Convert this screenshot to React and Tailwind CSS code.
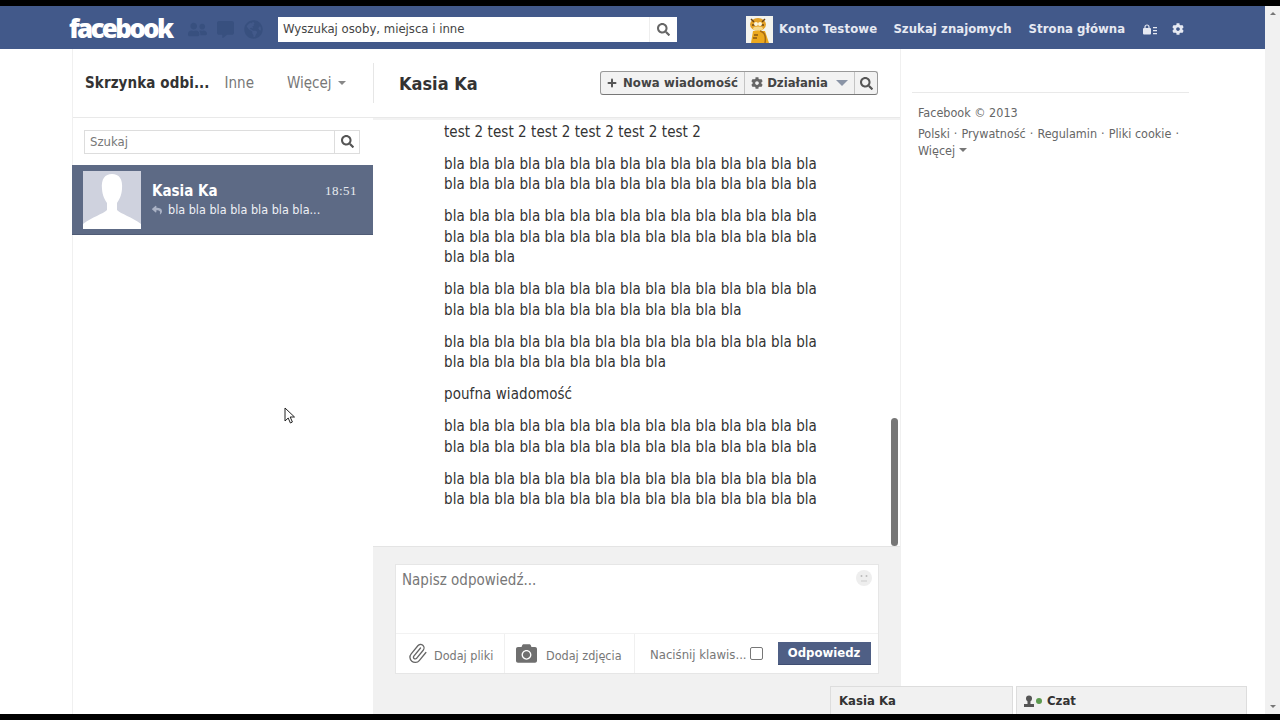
import React from 'react'
import { Paperclip, Plus } from 'lucide-react'
import { FaCog, FaUserFriends, FaCommentAlt, FaGlobeAmericas, FaReply, FaCamera, FaSearch } from 'react-icons/fa'

const paragraphs = [
  ['test 2 test 2 test 2 test 2 test 2 test 2'],
  ['bla bla bla bla bla bla bla bla bla bla bla bla bla bla bla', 'bla bla bla bla bla bla bla bla bla bla bla bla bla bla bla'],
  ['bla bla bla bla bla bla bla bla bla bla bla bla bla bla bla', 'bla bla bla bla bla bla bla bla bla bla bla bla bla bla bla', 'bla bla bla'],
  ['bla bla bla bla bla bla bla bla bla bla bla bla bla bla bla', 'bla bla bla bla bla bla bla bla bla bla bla bla'],
  ['bla bla bla bla bla bla bla bla bla bla bla bla bla bla bla', 'bla bla bla bla bla bla bla bla bla'],
  ['poufna wiadomość'],
  ['bla bla bla bla bla bla bla bla bla bla bla bla bla bla bla', 'bla bla bla bla bla bla bla bla bla bla bla bla bla bla bla'],
  ['bla bla bla bla bla bla bla bla bla bla bla bla bla bla bla', 'bla bla bla bla bla bla bla bla bla bla bla bla bla bla bla'],
]

function Caret({ className }) {
  return <span className={`inline-block w-0 h-0 border-x-[4px] border-x-transparent border-t-[4px] ${className}`} />
}

function Garfield() {
  return (
    <svg width="27" height="27" viewBox="0 0 27 27" className="shrink-0">
      <rect width="27" height="27" fill="#f3f3ee" />
      <ellipse cx="12" cy="8.500" rx="8" ry="6.500" fill="#e3a127" />
      <path d="M5 3l3 3M19 3l-3 3M6 9h3M15 9h3" stroke="#6b4514" strokeWidth="1.500" />
      <circle cx="10" cy="8" r="2" fill="#fbf6dc" />
      <circle cx="14" cy="8" r="2" fill="#fbf6dc" />
      <ellipse cx="12" cy="12.500" rx="5" ry="2" fill="#f6d98a" />
      <path d="M7 15h12l4 12H5z" fill="#eca91e" />
      <path d="M14 15c5 1 6 6 5 12" stroke="#a66a12" strokeWidth="1.500" fill="none" />
      <path d="M8 19h4M7 22h4" stroke="#8a5a14" strokeWidth="1.500" />
    </svg>
  )
}

function Header() {
  return (
    <div className="h-[43px] shrink-0 w-[1265px] bg-[#42598a] flex items-center pt-[3px] font-['DejaVu_Sans_Condensed','DejaVu_Sans',sans-serif]">
      <div className="w-[118px] ml-[70px] shrink-0 flex items-center">
        <span className="text-white text-[26px] font-extrabold leading-none tracking-[-2.700px] font-['Open_Sans',sans-serif] -mt-[3px] -ml-[1px]">facebook</span>
      </div>
      <div className="flex items-center w-[90px] gap-[10px] text-[#38507f] shrink-0">
        <FaUserFriends size={19} />
        <FaCommentAlt size={17} />
        <FaGlobeAmericas size={19} />
      </div>
      <div className="w-[399px] h-[25px] bg-white flex items-center shrink-0">
        <span className="flex-1 pl-[5px] text-[13px] text-[#444]">Wyszukaj osoby, miejsca i inne</span>
        <span className="w-[28px] h-full flex items-center justify-center border-l border-[#eee]">
          <FaSearch size={13} className="text-[#666]" />
        </span>
      </div>
      <div className="flex items-center ml-[69px] text-[13px] font-bold text-[#e6e9f2] shrink-0">
        <Garfield />
        <span className="ml-[6px] tracking-[0.15px]">Konto Testowe</span>
        <span className="ml-[16px] tracking-[0.05px]">Szukaj znajomych</span>
        <span className="ml-[17px] tracking-[0.05px]">Strona główna</span>
        <svg width="14" height="11" viewBox="0 0 14 11" className="ml-[18px]" fill="#e6e9f2">
          <rect x="0" y="4" width="8" height="6.500" rx="1" />
          <path d="M2 4.500V3a2 2 0 014 0v1.500" fill="none" stroke="#e6e9f2" strokeWidth="1.200" />
          <path d="M10 3h4v1.200h-4zM10 6h4v1.200h-4zM10 9h4v1.200h-4z" />
        </svg>
        <FaCog size={12} className="ml-[15px]" />
      </div>
    </div>
  )
}

function Sidebar() {
  return (
    <div className="w-[301px] shrink-0 border-l border-[#f0f0f0] font-['DejaVu_Sans_Condensed',sans-serif]">
      <div className="h-[69px] flex items-center pl-[12px] border-b border-[#e9e9e9]">
        <span className="text-[15px] font-bold text-[#333] tracking-[0.1px]">Skrzynka odbi...</span>
        <span className="ml-[15px] text-[15px] text-[#777]">Inne</span>
        <span className="ml-[33px] text-[15px] text-[#777]">Więcej</span>
        <Caret className="ml-[6px] border-t-[#888]" />
      </div>
      <div className="h-[47px] flex items-center pl-[11px]">
        <div className="w-[276px] h-[24px] border border-[#ddd] flex items-center">
          <span className="flex-1 pl-[5px] text-[13px] text-[#777]">Szukaj</span>
          <span className="w-[25px] h-full border-l border-[#ddd] flex items-center justify-center">
            <FaSearch size={13} className="text-[#555]" />
          </span>
        </div>
      </div>
      <div className="h-[70px] -ml-px bg-[#5d6a85] flex items-center pl-[11px] pr-[16px] border-b border-[#4f5b75]">
        <svg width="58" height="58" viewBox="0 0 58 58" className="shrink-0">
          <rect width="58" height="58" fill="#cfd2de" />
          <path d="M29 3c-7 0-11 5-10 15 .5 7 3 11 5 14v7c-4 4-15 7-24 14v5h58v-5c-9-7-20-10-24-14v-7c2-3 4.500-7 5-14 1-10-3-15-10-15z" fill="#fff" />
        </svg>
        <div className="flex-1 ml-[11px] text-white">
          <div className="flex items-center justify-between leading-[20px]">
            <span className="text-[15px] font-bold">Kasia Ka</span>
            <span className="text-[13px] text-[#e8eaf0] font-['Liberation_Serif','DejaVu_Serif',serif] tracking-[0.5px]">18:51</span>
          </div>
          <div className="flex items-center text-[12.500px] leading-[18px] text-[#eef0f5]">
            <FaReply size={10} className="text-[#aab2c5] mr-[6px]" />
            <span>bla bla bla bla bla bla bla...</span>
          </div>
        </div>
      </div>
    </div>
  )
}

function Composer() {
  return (
    <div className="h-[168px] shrink-0 bg-[#f1f1f1] border-t border-[#e4e4e4] pt-[17px] pl-[22px]">
      <div className="w-[484px] h-[110px] bg-white border border-[#e6e6e6] flex flex-col">
        <div className="flex-1 flex items-start justify-between px-[6px] pt-[4px] pr-[5px]">
          <span className="text-[15px] text-[#777]">Napisz odpowiedź...</span>
          <svg width="18" height="18" viewBox="0 0 18 18">
            <circle cx="9" cy="9" r="8" fill="#eeeeee" />
            <circle cx="6.500" cy="7" r="1" fill="#bbb" />
            <circle cx="11.500" cy="7" r="1" fill="#bbb" />
            <path d="M6 12h6" stroke="#ccc" />
          </svg>
        </div>
        <div className="h-[40px] border-t border-[#f2f2f2] flex items-center text-[13px] text-[#777]">
          <div className="w-[109px] h-full flex items-center pl-[11px] border-r border-[#f0f0f0]">
            <Paperclip size={21} strokeWidth={1.500} className="text-[#666] -rotate-[5deg]" />
            <span className="ml-[6px] mt-[5px] text-[12.500px]">Dodaj pliki</span>
          </div>
          <div className="w-[130px] h-full flex items-center pl-[11px] border-r border-[#f0f0f0]">
            <FaCamera size={21} className="text-[#6f6f6f]" />
            <span className="ml-[9px] mt-[5px] text-[12.500px]">Dodaj zdjęcia</span>
          </div>
          <span className="ml-[15px] mt-[2px]">Naciśnij klawis...</span>
          <span className="ml-[3px] w-[13px] h-[13px] border border-[#777] rounded-[2px] bg-white" />
          <span className="ml-[15px] w-[93px] h-[23px] bg-[#4f5f85] border-b border-[#3f4e72] text-white font-bold flex items-center justify-center">Odpowiedz</span>
        </div>
      </div>
    </div>
  )
}

function Thread() {
  return (
    <div className="w-[527px] shrink-0 relative flex flex-col font-['DejaVu_Sans_Condensed',sans-serif]">
      <div className="h-[69px] shrink-0 border-b border-[#e9e9e9] flex items-center pl-[26px] relative">
        <span className="absolute left-0 top-[14px] h-[40px] border-l border-[#e6e6e6]" />
        <span className="text-[18px] font-bold text-[#333]">Kasia Ka</span>
        <div className="ml-auto mr-[22px] h-[24px] flex items-center border border-[#999] border-b-[#777] rounded-[3px] bg-[#f2f2f2] text-[13px] font-bold text-[#444]">
          <span className="h-full flex items-center pl-[5px] pr-[6px] border-r border-[#c4c4c4] tracking-[0.1px]">
            <Plus size={12} strokeWidth={4} className="text-[#555] mr-[5px]" />
            Nowa wiadomość
          </span>
          <span className="h-full flex items-center pl-[6px] pr-[6px] border-r border-[#c4c4c4]">
            <FaCog size={12} className="text-[#666] mr-[4px]" />
            Działania
            <span className="ml-[8px] w-0 h-0 border-x-[6px] border-x-transparent border-t-[6px] border-t-[#8a94a6]" />
          </span>
          <span className="h-full w-[22px] flex items-center justify-center">
            <FaSearch size={13} className="text-[#555]" />
          </span>
        </div>
      </div>
      <div className="flex-1 pl-[71px] pt-[1.500px] border-t-[2px] border-[#f2f2f2] overflow-hidden text-[15px] leading-[20.500px] tracking-[0.07px] text-[#333] relative">
        {paragraphs.map((lines, i) => (
          <div key={i} className="mb-[11.500px]">
            {lines.map((line, j) => <div key={j} className="whitespace-nowrap">{line}</div>)}
          </div>
        ))}
        <div className="absolute right-[2px] bottom-0 w-[7px] h-[128px] rounded-[4px] bg-[#777]" />
      </div>
      <Composer />
    </div>
  )
}

function RightColumn() {
  return (
    <div className="w-[365px] shrink-0 border-l border-[#f0f0f0] pl-[11px] pt-[43px] font-['DejaVu_Sans_Condensed',sans-serif] text-[12.500px] text-[#666]">
      <div className="w-[277px] border-t border-[#e9e9e9] pt-[11px] pl-[6px] leading-[17px]">
        <div className="mb-[3.500px]">Facebook © 2013</div>
        <div className="whitespace-nowrap flex gap-[4px]">
          <span>Polski</span><span>·</span><span>Prywatność</span><span>·</span><span>Regulamin</span><span>·</span><span>Pliki cookie</span><span>·</span>
        </div>
        <div className="flex items-center gap-[4px]">
          Więcej <Caret className="border-x-[3px] border-t-[3px] border-t-[#777]" />
        </div>
      </div>
    </div>
  )
}

export default function App() {
  return (
    <div className="w-[1280px] h-[720px] bg-black overflow-hidden relative flex flex-col">
      <div className="h-[6px] shrink-0" />
      <div className="flex-1 flex min-h-0">
        <div className="w-[1265px] flex flex-col bg-white">
          <Header />
          <div className="flex-1 flex pl-[72px] min-h-0">
            <Sidebar />
            <Thread />
            <RightColumn />
          </div>
        </div>
        <div className="w-[15px] bg-[#f1f1f1] flex flex-col items-center justify-between py-[6px]">
          <span className="w-0 h-0 border-x-[3px] border-x-transparent border-b-[3px] border-b-[#777]" />
          <span className="w-0 h-0 border-x-[3px] border-x-transparent border-t-[3px] border-t-[#777]" />
        </div>
      </div>
      <div className="h-[6px] shrink-0" />

      {/* chat dock */}
      <div className="absolute left-[830px] top-[686px] h-[28px] flex gap-[3px] font-['DejaVu_Sans_Condensed',sans-serif] text-[13px] font-bold text-[#333]">
        <div className="w-[183px] bg-[#f1f1f1] border-t border-x border-[#ddd] flex items-center pl-[8px]">Kasia Ka</div>
        <div className="w-[231px] bg-[#f1f1f1] border-t border-x border-[#ddd] flex items-center pl-[7px]">
          <svg width="10" height="12" viewBox="0 0 10 12" fill="#555"><circle cx="5" cy="3.500" r="3" /><path d="M3.500 6h3v3h3.500v3H0V9h3.500z" /></svg>
          <span className="ml-[2px] w-[6px] h-[6px] rounded-full bg-[#5c9a4f]" />
          <span className="ml-[5px]">Czat</span>
        </div>
      </div>

      {/* mouse pointer */}
      <svg width="12" height="18" viewBox="0 0 12 18" className="absolute left-[284px] top-[407px]">
        <path d="M1 1v13l3.200-3 2.200 5 2-1-2.200-5H10.500z" fill="#fff" stroke="#222" strokeWidth="1" />
      </svg>
    </div>
  )
}
